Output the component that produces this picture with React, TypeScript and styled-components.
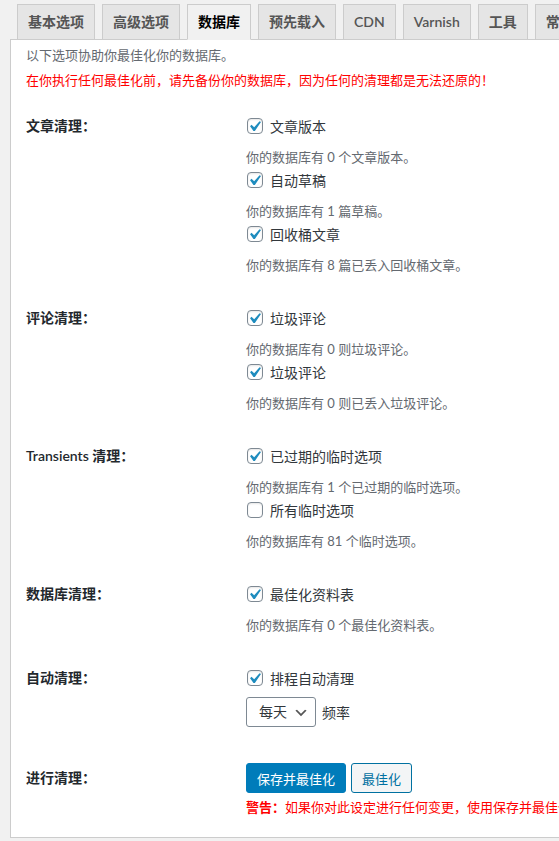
import React from 'react';
import styled, { createGlobalStyle } from 'styled-components';

const GlobalStyle = createGlobalStyle`
    html, body {
        margin: 0;
        padding: 0;
        background: #f1f1f1;
        overflow: hidden;
    }
    body {
        font-family: "Lato", "Noto Sans CJK SC", sans-serif;
        color: #32373c;
    }
`;

const Wrap = styled.div`
    width: 940px;
    padding: 4px 0 0 10px;
`;

const TabBar = styled.div`
    display: flex;
    gap: 7px;
    padding-left: 7px;
    height: 35px;
    align-items: flex-end;
`;

const Tab = styled.div<{ $active?: boolean }>`
    flex: none;
    padding: 5px 10px;
    font-size: 14px;
    line-height: 24px;
    font-weight: 600;
    border: 1px solid #ccc;
    border-bottom: ${p => (p.$active ? '1px solid #f1f1f1' : 'none')};
    margin-bottom: ${p => (p.$active ? '-1px' : '0')};
    background: ${p => (p.$active ? '#f1f1f1' : '#e5e5e5')};
    color: ${p => (p.$active ? '#000' : '#555')};
    position: relative;
    z-index: 1;
`;

const Panel = styled.div`
    background: #fff;
    border: 1px solid #ccc;
    padding: 0 15px 5px 15px;
`;

const Intro = styled.p<{ $warn?: boolean }>`
    margin: 5px 0 0;
    font-size: 13px;
    line-height: 20px;
    color: ${p => (p.$warn ? '#f00' : '#646970')};
`;

const Table = styled.div`
    margin-top: 10px;
`;

const Row = styled.div`
    display: grid;
    grid-template-columns: 220px 1fr;
    padding: 15px 0;
`;

const Th = styled.div<{ $lh?: number }>`
    font-size: 14px;
    font-weight: 600;
    line-height: ${p => p.$lh ?? 22}px;
    color: #23282d;
`;

const Td = styled.div`
    display: flex;
    flex-direction: column;
    align-items: flex-start;
`;

const CheckLine = styled.label`
    display: flex;
    align-items: center;
    height: 22px;
    gap: 7px;
    padding-left: 1px;
    font-size: 14px;
    color: #32373c;
`;

const Box = styled.span`
    position: relative;
    width: 16px;
    height: 16px;
    box-sizing: border-box;
    border: 1px solid #7e8993;
    border-radius: 4px;
    background: #fff;
    box-shadow: inset 0 1px 2px rgba(0, 0, 0, 0.1);

    svg {
        position: absolute;
        left: -4px;
        top: -3px;
    }
`;

const Desc = styled.p`
    margin: 10px 0 2px;
    font-size: 13px;
    line-height: 20px;
    color: #646970;
`;

const SelectLine = styled.div`
    display: flex;
    align-items: center;
    gap: 6px;
    margin: 8px 0 6px;
    font-size: 14px;
    color: #32373c;
`;

const Select = styled.div`
    position: relative;
    width: 70px;
    height: 30px;
    box-sizing: border-box;
    border: 1px solid #7e8993;
    border-radius: 3px;
    padding-left: 12px;
    font-size: 14px;
    line-height: 28px;
    color: #32373c;

    svg {
        position: absolute;
        right: 6px;
        top: 7px;
    }
`;

const Buttons = styled.div`
    display: flex;
    gap: 5px;
`;

const Button = styled.button<{ $primary?: boolean }>`
    height: 30px;
    padding: 0 10px;
    font-family: inherit;
    font-size: 13px;
    border-radius: 3px;
    border: 1px solid ${p => (p.$primary ? '#007cba' : '#0071a1')};
    background: ${p => (p.$primary ? '#007cba' : '#f3f5f6')};
    color: ${p => (p.$primary ? '#fff' : '#0071a1')};
`;

const Warning = styled.p`
    margin: 4px 0 0;
    font-size: 13px;
    line-height: 20px;
    color: #f00;
    white-space: nowrap;

    b {
        font-weight: 600;
    }
`;

const Check = ({ checked, label }: { checked: boolean; label: string }) => (
    <CheckLine>
        <Box>
            {checked && (
                <svg width="21" height="21" viewBox="0 0 20 20">
                    <path d="M14.83 4.89l1.34.94-5.81 8.38H9.02L5.78 9.67l1.34-1.25 2.57 2.4z" fill="#1e8cbe" />
                </svg>
            )}
        </Box>
        {label}
    </CheckLine>
);

interface Item {
    label: string;
    checked: boolean;
    desc: string;
}

interface Section {
    title: string;
    items: Item[];
}

const sections: Section[] = [
    {
        title: '文章清理：',
        items: [
            { label: '文章版本', checked: true, desc: '你的数据库有 0 个文章版本。' },
            { label: '自动草稿', checked: true, desc: '你的数据库有 1 篇草稿。' },
            { label: '回收桶文章', checked: true, desc: '你的数据库有 8 篇已丢入回收桶文章。' },
        ],
    },
    {
        title: '评论清理：',
        items: [
            { label: '垃圾评论', checked: true, desc: '你的数据库有 0 则垃圾评论。' },
            { label: '垃圾评论', checked: true, desc: '你的数据库有 0 则已丢入垃圾评论。' },
        ],
    },
    {
        title: 'Transients 清理：',
        items: [
            { label: '已过期的临时选项', checked: true, desc: '你的数据库有 1 个已过期的临时选项。' },
            { label: '所有临时选项', checked: false, desc: '你的数据库有 81 个临时选项。' },
        ],
    },
    {
        title: '数据库清理：',
        items: [{ label: '最佳化资料表', checked: true, desc: '你的数据库有 0 个最佳化资料表。' }],
    },
];

const tabs = ['基本选项', '高级选项', '数据库', '预先载入', 'CDN', 'Varnish', '工具', '常规'];

export default function App() {
    return (
        <Wrap>
            <GlobalStyle />
            <TabBar>
                {tabs.map(t => (
                    <Tab key={t} $active={t === '数据库'}>{t}</Tab>
                ))}
            </TabBar>
            <Panel>
                <Intro>以下选项协助你最佳化你的数据库。</Intro>
                <Intro $warn>在你执行任何最佳化前，请先备份你的数据库，因为任何的清理都是无法还原的！</Intro>
                <Table>
                    {sections.map(s => (
                        <Row key={s.title}>
                            <Th>{s.title}</Th>
                            <Td>
                                {s.items.map((it, i) => (
                                    <React.Fragment key={i}>
                                        <Check checked={it.checked} label={it.label} />
                                        <Desc>{it.desc}</Desc>
                                    </React.Fragment>
                                ))}
                            </Td>
                        </Row>
                    ))}
                    <Row>
                        <Th>自动清理：</Th>
                        <Td>
                            <Check checked label="排程自动清理" />
                            <SelectLine>
                                <Select>
                                    每天
                                    <svg width="16" height="16" viewBox="0 0 20 20">
                                        <path d="M5 6l5 5 5-5 2 1-7 7-7-7 2-1z" fill="#555" />
                                    </svg>
                                </Select>
                                频率
                            </SelectLine>
                        </Td>
                    </Row>
                    <Row>
                        <Th $lh={30}>进行清理：</Th>
                        <Td>
                            <Buttons>
                                <Button $primary>保存并最佳化</Button>
                                <Button>最佳化</Button>
                            </Buttons>
                            <Warning>
                                <b>警告：</b>如果你对此设定进行任何变更，使用保存并最佳化按钮以保存设定。
                            </Warning>
                        </Td>
                    </Row>
                </Table>
            </Panel>
        </Wrap>
    );
}
